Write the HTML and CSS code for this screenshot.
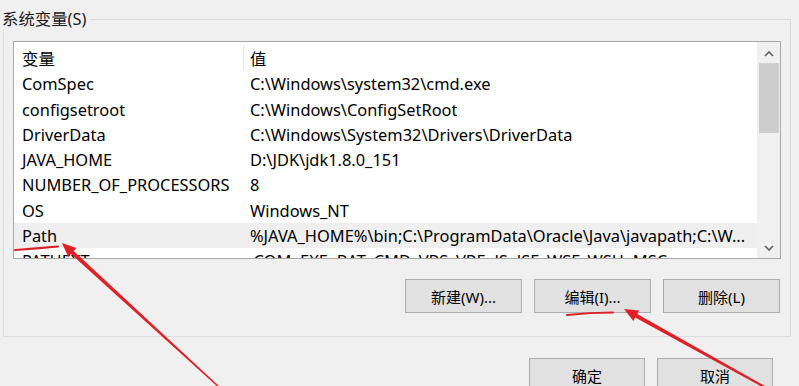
FILE: index.html
```html
<!DOCTYPE html>
<html lang="zh-CN">
<head>
<meta charset="utf-8">
<title>系统变量</title>
<link rel="stylesheet" href="styles.css">
</head>
<body>
<fieldset class="group">
  <legend class="group-title">系统变量(S)</legend>
  <div class="group-inner">
    <div class="list">
      <div class="list-main">
        <div class="row head">
          <div class="c1">变量</div>
          <div class="c2">值</div>
        </div>
        <div class="row"><div class="c1">ComSpec</div><div class="c2">C:\Windows\system32\cmd.exe</div></div>
        <div class="row"><div class="c1">configsetroot</div><div class="c2">C:\Windows\ConfigSetRoot</div></div>
        <div class="row"><div class="c1">DriverData</div><div class="c2">C:\Windows\System32\Drivers\DriverData</div></div>
        <div class="row"><div class="c1">JAVA_HOME</div><div class="c2">D:\JDK\jdk1.8.0_151</div></div>
        <div class="row"><div class="c1">NUMBER_OF_PROCESSORS</div><div class="c2">8</div></div>
        <div class="row"><div class="c1">OS</div><div class="c2">Windows_NT</div></div>
        <div class="row sel"><div class="c1">Path</div><div class="c2">%JAVA_HOME%\bin;C:\ProgramData\Oracle\Java\javapath;C:\W...</div></div>
        <div class="row"><div class="c1">PATHEXT</div><div class="c2">.COM;.EXE;.BAT;.CMD;.VBS;.VBE;.JS;.JSE;.WSF;.WSH;.MSC</div></div>
      </div>
      <div class="scrollbar">
        <svg class="chev" width="12" height="8" viewBox="0 0 12 8"><path d="M2 6 L6 2 L10 6" fill="none" stroke="#606060" stroke-width="1.6"/></svg>
        <div class="track"><div class="thumb"></div></div>
        <svg class="chev" width="12" height="8" viewBox="0 0 12 8"><path d="M2 2 L6 6 L10 2" fill="none" stroke="#606060" stroke-width="1.6"/></svg>
      </div>
    </div>
    <div class="actions">
      <button class="btn">新建(W)...</button>
      <button class="btn">编辑(I)...</button>
      <button class="btn">删除(L)</button>
    </div>
  </div>
</fieldset>
<div class="footer">
  <button class="btn">确定</button>
  <button class="btn">取消</button>
</div>
<svg class="marks" width="799" height="386" viewBox="0 0 799 386">
  <path d="M15 250 Q36 248.5 58 246.5" fill="none" stroke="#dc1f26" stroke-width="2" stroke-linecap="round"/>
  <polygon points="62,243 68.2,256.9 71,254 219.5,388.5 220.5,387.5 73.7,251 76.4,248.1" fill="#e01f26"/>
  <path d="M567 315 Q590 312.5 613 312.5" fill="none" stroke="#dc1f26" stroke-width="2" stroke-linecap="round"/>
  <polygon points="624,309 633.3,321 635.2,317.5 769.5,390.9 770.5,389.1 637.2,314.1 639.1,310.6" fill="#e01f26"/>
</svg>
</body>
</html>
```
FILE: styles.css
```css
html, body {
  margin: 0;
  padding: 0;
}
body {
  width: 799px;
  height: 386px;
  overflow: hidden;
  position: relative;
  background: #f0f0f0;
  font-family: "Noto Sans", "Noto Sans CJK SC", sans-serif;
  font-size: 15px;
  color: #000;
}
.group {
  box-sizing: border-box;
  width: 788px;
  margin: 9px 0 0 3px;
  padding: 0;
  border: 1px solid #dcdcdc;
}
.group-title {
  margin-left: -2px;
  padding: 0 4px 0 0;
  font-size: 16.4px;
  line-height: 20px;
  height: 20px;
  color: #1a1a1a;
}
.group-inner {
  padding: 12px 9px 23px 9px;
}
.list {
  box-sizing: border-box;
  width: 768px;
  height: 218px;
  border: 1px solid #a8a8a8;
  background: #fff;
  display: flex;
  font-size: 16.4px;
}
.list-main {
  flex: 1;
  overflow: hidden;
}
.row {
  display: flex;
  height: 25.3px;
  line-height: 25.3px;
  white-space: nowrap;
}
.row.head {
  padding-top: 4px;
}
.row.head .c1 {
  border-right: 1px solid #e5e5e5;
}
.row.sel {
  background: #efefef;
}
.c1 {
  box-sizing: border-box;
  width: 230px;
  padding-left: 8px;
  flex: none;
}
.c2 {
  padding-left: 6px;
  overflow: hidden;
}
.scrollbar {
  width: 23px;
  flex: none;
  background: #f0f0f0;
  display: flex;
  flex-direction: column;
  align-items: center;
}
.chev {
  display: block;
  margin: 8px 0 5px;
}
.scrollbar .chev:last-child {
  margin: 0 0 6px;
}
.track {
  flex: 1;
  width: 100%;
  display: flex;
  justify-content: center;
}
.thumb {
  width: 20px;
  height: 70px;
  background: #cdcdcd;
}
.actions {
  display: flex;
  justify-content: flex-end;
  gap: 12px;
  margin-top: 20px;
  padding-right: 1px;
}
.btn {
  box-sizing: border-box;
  width: 117px;
  height: 34px;
  padding: 0;
  background: #e1e1e1;
  border: 1px solid #adadad;
  border-radius: 0;
  font: inherit;
  color: #000;
}
.footer {
  display: flex;
  justify-content: flex-end;
  gap: 12px;
  margin-top: 21px;
  padding-right: 26px;
}
.footer .btn {
  width: 116px;
  flex: none;
}
.marks {
  position: absolute;
  left: 0;
  top: 0;
  pointer-events: none;
}
```
